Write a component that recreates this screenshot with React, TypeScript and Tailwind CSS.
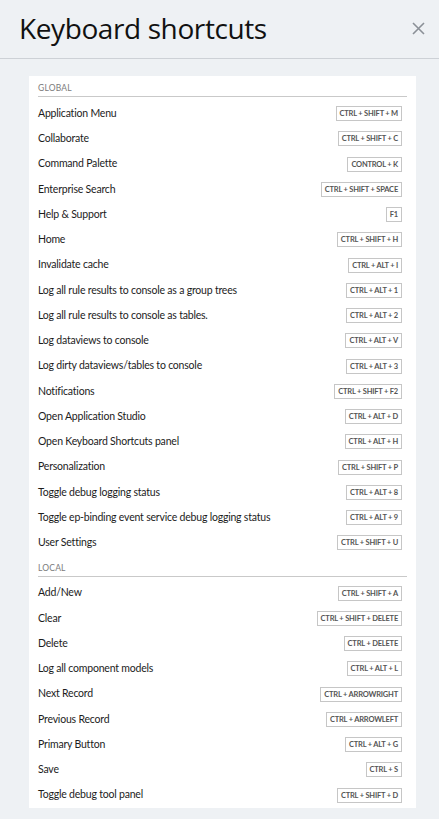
import React from 'react';

type Shortcut = { label: string; keys: string };

const globalShortcuts: Shortcut[] = [
  { label: 'Application Menu', keys: 'CTRL + SHIFT + M' },
  { label: 'Collaborate', keys: 'CTRL + SHIFT + C' },
  { label: 'Command Palette', keys: 'CONTROL + K' },
  { label: 'Enterprise Search', keys: 'CTRL + SHIFT + SPACE' },
  { label: 'Help & Support', keys: 'F1' },
  { label: 'Home', keys: 'CTRL + SHIFT + H' },
  { label: 'Invalidate cache', keys: 'CTRL + ALT + I' },
  { label: 'Log all rule results to console as a group trees', keys: 'CTRL + ALT + 1' },
  { label: 'Log all rule results to console as tables.', keys: 'CTRL + ALT + 2' },
  { label: 'Log dataviews to console', keys: 'CTRL + ALT + V' },
  { label: 'Log dirty dataviews/tables to console', keys: 'CTRL + ALT + 3' },
  { label: 'Notifications', keys: 'CTRL + SHIFT + F2' },
  { label: 'Open Application Studio', keys: 'CTRL + ALT + D' },
  { label: 'Open Keyboard Shortcuts panel', keys: 'CTRL + ALT + H' },
  { label: 'Personalization', keys: 'CTRL + SHIFT + P' },
  { label: 'Toggle debug logging status', keys: 'CTRL + ALT + 8' },
  { label: 'Toggle ep-binding event service debug logging status', keys: 'CTRL + ALT + 9' },
  { label: 'User Settings', keys: 'CTRL + SHIFT + U' },
];

const localShortcuts: Shortcut[] = [
  { label: 'Add/New', keys: 'CTRL + SHIFT + A' },
  { label: 'Clear', keys: 'CTRL + SHIFT + DELETE' },
  { label: 'Delete', keys: 'CTRL + DELETE' },
  { label: 'Log all component models', keys: 'CTRL + ALT + L' },
  { label: 'Next Record', keys: 'CTRL + ARROWRIGHT' },
  { label: 'Previous Record', keys: 'CTRL + ARROWLEFT' },
  { label: 'Primary Button', keys: 'CTRL + ALT + G' },
  { label: 'Save', keys: 'CTRL + S' },
  { label: 'Toggle debug tool panel', keys: 'CTRL + SHIFT + D' },
];

const Section: React.FC<{ title: string; items: Shortcut[] }> = ({ title, items }) => (
  <div className="pt-[6px]">
    <div className="text-[8.5px] leading-[12px] tracking-[0.2px] text-[#7b7b7b] uppercase pb-[2px] border-b border-[#c9c9c9]">
      {title}
    </div>
    <div className="pt-[4px]">
      {items.map((s) => (
        <div key={s.label} className="h-[25.25px] flex items-center justify-between pr-[5px]">
          <span className="text-[10.5px] tracking-[-0.2px] text-[#1c1c1c]">{s.label}</span>
          <span className="h-[15px] px-[3px] flex items-center border border-[#c6c6c6] text-[7.5px] font-bold text-[#555] tracking-[-0.2px] whitespace-pre">
            {s.keys}
          </span>
        </div>
      ))}
    </div>
  </div>
);

const App: React.FC = () => {
  return (
    <div
      className="min-h-screen bg-[#eef1f4] pb-[12px]"
      style={{ fontFamily: 'Lato, "Noto Sans", sans-serif' }}
    >
      <header className="h-[59px] flex items-center justify-between pl-[19px] pr-[14px] border-b border-[#cdd1d6]">
        <h1
          className="text-[28px] leading-none tracking-[-0.4px] text-[#111] -mt-[2px]"
          style={{ fontFamily: '"Open Sans", "Noto Sans", sans-serif' }}
        >
          Keyboard shortcuts
        </h1>
        <svg width="13" height="13" viewBox="0 0 13 13" className="-mt-[2px]">
          <path d="M1 1 L12 12 M12 1 L1 12" stroke="#8b9097" strokeWidth="1.6" />
        </svg>
      </header>
      <div className="ml-[29px] mr-[23px] mt-[17px] bg-white px-[9px]">
        <Section title="Global" items={globalShortcuts} />
        <Section title="Local" items={localShortcuts} />
      </div>
    </div>
  );
};

export default App;
